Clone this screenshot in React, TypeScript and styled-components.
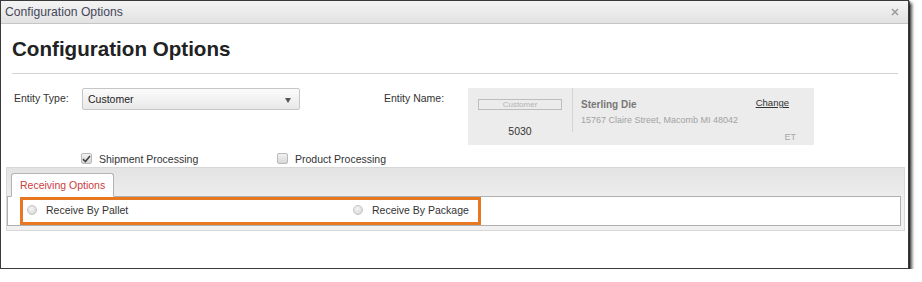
import React from "react";
import styled, { createGlobalStyle } from "styled-components";

const GlobalStyle = createGlobalStyle`
  html, body {
    margin: 0;
    padding: 0;
    background: #fff;
  }
  body {
    font-family: "Liberation Sans", Arial, sans-serif;
    font-size: 10.5px;
    color: #333;
  }
`;

const Dialog = styled.div`
  box-sizing: border-box;
  width: 909px;
  height: 269px;
  border: 1px solid #3a3a3a;
  background: #fff;
  box-shadow: 3px 3px 3px rgba(0, 0, 0, 0.7), 1px 1px 1px rgba(0, 0, 0, 0.5);
  display: flex;
  flex-direction: column;
`;

const TitleBar = styled.div`
  height: 22px;
  flex: none;
  display: flex;
  align-items: center;
  justify-content: space-between;
  padding: 0 9px 0 4px;
  background: linear-gradient(#f4f4f4, #e2e2e2);
  border-bottom: 1px solid #c6c6c6;
  font-size: 12.2px;
  color: #45475a;
`;

const Close = styled.svg`
  width: 8px;
  height: 8px;
  display: block;
`;

const Heading = styled.h1`
  margin: 13px 0 0 11px;
  font-size: 20.6px;
  line-height: 24px;
  font-weight: bold;
  color: #222;
`;

const Rule = styled.div`
  margin: 12px 10px 0 11px;
  height: 1px;
  background: #d2d2d2;
`;

const FormRow = styled.div`
  display: flex;
  align-items: flex-start;
  margin: 14px 0 0 13px;
`;

const FieldLabel = styled.label<{ $width: number; $gap?: number }>`
  width: ${(p) => p.$width}px;
  margin-left: ${(p) => p.$gap ?? 0}px;
  padding-top: 4px;
  flex: none;
  color: #333;
`;

const Select = styled.div`
  box-sizing: border-box;
  width: 218px;
  height: 22px;
  display: flex;
  align-items: center;
  justify-content: space-between;
  padding: 0 8px 0 5px;
  border: 1px solid #c6c6c6;
  border-radius: 2px;
  background: linear-gradient(#fbfbfb, #e9e9e9);
  color: #222;
`;

const Arrow = styled.span`
  width: 0;
  height: 0;
  border-left: 3px solid transparent;
  border-right: 3px solid transparent;
  border-top: 5px solid #555;
  margin-top: 2px;
`;

const EntityCard = styled.div`
  width: 346px;
  height: 57px;
  display: flex;
  background: #ececec;
`;

const CardLeft = styled.div`
  box-sizing: border-box;
  width: 104px;
  padding: 11px 10px 0 10px;
  display: flex;
  flex-direction: column;
  align-items: center;
`;

const MiniBox = styled.div`
  box-sizing: border-box;
  width: 84px;
  height: 11px;
  border: 1px solid #bdbdbd;
  font-size: 8px;
  line-height: 9px;
  text-align: center;
  color: #b3b3b3;
`;

const Number = styled.div`
  margin-top: 15px;
  font-size: 10.5px;
  color: #333;
`;

const CardDivider = styled.div`
  width: 1px;
  height: 44px;
  background: #d4d4d4;
`;

const CardRight = styled.div`
  flex: 1;
  display: grid;
  grid-template-columns: 1fr auto;
  padding: 9px 18px 0 8px;
`;

const EntityName = styled.div`
  font-size: 10px;
  font-weight: bold;
  color: #777;
  padding-top: 2px;
`;

const ChangeLink = styled.a`
  font-size: 9.5px;
  color: #333;
  text-decoration: underline;
  justify-self: end;
  margin-right: 7px;
`;

const Address = styled.div`
  font-size: 9px;
  color: #a2a2a2;
  margin-top: 2px;
`;

const Zone = styled.div`
  font-size: 9px;
  color: #a8a8a8;
  justify-self: end;
  grid-column: 2;
  margin-top: 4px;
`;

const CheckRow = styled.div`
  display: flex;
  align-items: center;
  height: 17px;
  margin: 5px 0 0 80px;
`;

const CheckItem = styled.label<{ $width?: number }>`
  display: flex;
  align-items: center;
  gap: 7px;
  width: ${(p) => (p.$width ? `${p.$width}px` : "auto")};
  color: #333;
`;

const CheckBox = styled.span`
  box-sizing: border-box;
  width: 11px;
  height: 11px;
  border: 1px solid #b9b9b9;
  border-radius: 2px;
  background: linear-gradient(#f2f2f2, #d7d7d7);
  display: flex;
  align-items: center;
  justify-content: center;
`;

const TabPanel = styled.div`
  margin: 0 3px 0 5px;
  border: 1px solid #d8d8d8;
  background: linear-gradient(#e3e3e3, #f1f1f1 40px);
  padding: 5px 3px 4px 0;
`;

const TabStrip = styled.div`
  display: flex;
  padding-left: 4px;
`;

const Tab = styled.div`
  position: relative;
  z-index: 1;
  height: 22px;
  margin-bottom: -1px;
  padding: 0 8px;
  display: flex;
  align-items: center;
  background: #fff;
  border: 1px solid #b3b3b3;
  border-bottom: 1px solid #fff;
  border-radius: 3px 3px 0 0;
  color: #c9403e;
`;

const TabBody = styled.div`
  height: 28px;
  border: 1px solid #b0b0b0;
  background: #fff;
  display: flex;
  padding-left: 12px;
`;

const RadioGroup = styled.div`
  box-sizing: border-box;
  width: 461px;
  height: 28px;
  border: 3px solid #e87722;
  display: flex;
  align-items: center;
  padding-left: 4px;
`;

const RadioItem = styled.label<{ $width?: number }>`
  display: flex;
  align-items: center;
  gap: 9px;
  width: ${(p) => (p.$width ? `${p.$width}px` : "auto")};
  color: #333;
  margin-top: -3px;
`;

const Radio = styled.span`
  box-sizing: border-box;
  width: 10px;
  height: 10px;
  border-radius: 50%;
  border: 1px solid #c4c4c4;
  background: radial-gradient(circle at 40% 35%, #f4f4f4, #d2d2d2);
`;

const Check = () => (
  <svg width="9" height="8" viewBox="0 0 9 8">
    <path d="M1 4.2 L3.4 6.5 L8 1" fill="none" stroke="#444" strokeWidth="1.6" />
  </svg>
);

export default function App() {
  return (
    <>
      <GlobalStyle />
      <Dialog>
        <TitleBar>
          <span>Configuration Options</span>
          <Close viewBox="0 0 8 8">
            <path d="M1 1 L7 7 M7 1 L1 7" stroke="#9a9a9a" strokeWidth="1.5" />
          </Close>
        </TitleBar>
        <Heading>Configuration Options</Heading>
        <Rule />
        <FormRow>
          <FieldLabel $width={68}>Entity Type:</FieldLabel>
          <Select>
            <span>Customer</span>
            <Arrow />
          </Select>
          <FieldLabel $width={84} $gap={84}>
            Entity Name:
          </FieldLabel>
          <EntityCard>
            <CardLeft>
              <MiniBox>Customer</MiniBox>
              <Number>5030</Number>
            </CardLeft>
            <CardDivider />
            <CardRight>
              <EntityName>Sterling Die</EntityName>
              <ChangeLink>Change</ChangeLink>
              <Address>15767 Claire Street, Macomb MI 48042</Address>
              <span />
              <Zone>ET</Zone>
            </CardRight>
          </EntityCard>
        </FormRow>
        <CheckRow>
          <CheckItem $width={196}>
            <CheckBox>
              <Check />
            </CheckBox>
            Shipment Processing
          </CheckItem>
          <CheckItem>
            <CheckBox />
            Product Processing
          </CheckItem>
        </CheckRow>
        <TabPanel>
          <TabStrip>
            <Tab>Receiving Options</Tab>
          </TabStrip>
          <TabBody>
            <RadioGroup>
              <RadioItem $width={326}>
                <Radio />
                Receive By Pallet
              </RadioItem>
              <RadioItem>
                <Radio />
                Receive By Package
              </RadioItem>
            </RadioGroup>
          </TabBody>
        </TabPanel>
      </Dialog>
    </>
  );
}
